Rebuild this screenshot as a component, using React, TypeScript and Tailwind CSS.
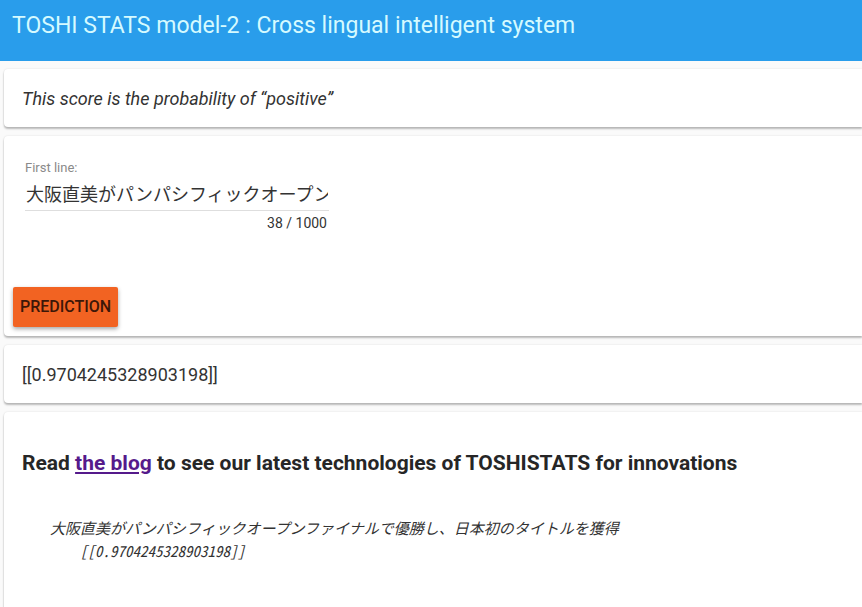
import { useState } from 'react';
import type { ReactNode } from 'react';

const SCORE = '[[0.9704245328903198]]';
const MAX_LENGTH = 1000;

function Card({ children, className = '' }: { children: ReactNode; className?: string }) {
  return (
    <section
      className={`rounded-l-sm bg-white shadow-[0_2px_2px_rgba(0,0,0,0.25),0_0_2px_rgba(0,0,0,0.12)] ${className}`}
    >
      {children}
    </section>
  );
}

export default function App() {
  const [line, setLine] = useState('大阪直美がパンパシフィックオープンファイナルで優勝し、日本初のタイトルを獲得');

  return (
    <div className="min-h-screen overflow-x-hidden bg-[#fafafa] font-['Roboto','Noto_Sans_CJK_JP',sans-serif] text-[#333333]">
      <header className="bg-[#299deb] px-3 pt-3 pb-[21px]">
        <h1 className="text-[23px] leading-7 text-[#d5faff]">TOSHI STATS model-2 : Cross lingual intelligent system</h1>
      </header>

      <main className="flex flex-col gap-[9px] pt-2 pl-1">
        <Card className="px-[18px] pt-4 pb-3.5">
          <p className="text-lg leading-7 italic">This score is the probability of “positive”</p>
        </Card>

        <Card className="px-[9px] pt-6 pb-[9px]">
          <div className="ml-3 w-[304px]">
            <label htmlFor="first-line" className="block text-[13px] leading-4 text-[#8a8a8a]">
              First line:
            </label>
            <input
              id="first-line"
              type="text"
              value={line}
              maxLength={MAX_LENGTH}
              onChange={(event) => setLine(event.target.value)}
              className="block h-[35px] w-full border-b border-[#dedede] bg-transparent px-px text-lg outline-none"
            />
            <p className="pt-1 pr-0.5 text-right text-sm leading-4">
              {line.length} / {MAX_LENGTH}
            </p>
          </div>
          <button
            type="button"
            className="mt-14 block h-10 rounded-xs bg-[#f26322] px-[7px] text-base font-medium text-[#3d1708] shadow-[0_2px_4px_rgba(0,0,0,0.35)]"
          >
            PREDICTION
          </button>
        </Card>

        <Card className="px-[18px] pt-4 pb-3.5">
          <p className="text-lg leading-7">{SCORE}</p>
        </Card>

        <Card className="min-h-[200px] px-[18px] pt-9">
          <h2 className="text-[21px] leading-[30px] font-bold text-[#262626]">
            Read{' '}
            <a href="#blog" className="text-[#551a8b] underline">
              the blog
            </a>{' '}
            to see our latest technologies of TOSHISTATS for innovations
          </h2>
          <div className="mt-10 pl-7 text-[15px] leading-[22px] italic">
            <p>{line}</p>
            <p className="pl-[30px] font-['Noto_Sans_Mono_CJK_JP','Liberation_Mono',monospace]">{SCORE}</p>
          </div>
        </Card>
      </main>
    </div>
  );
}
